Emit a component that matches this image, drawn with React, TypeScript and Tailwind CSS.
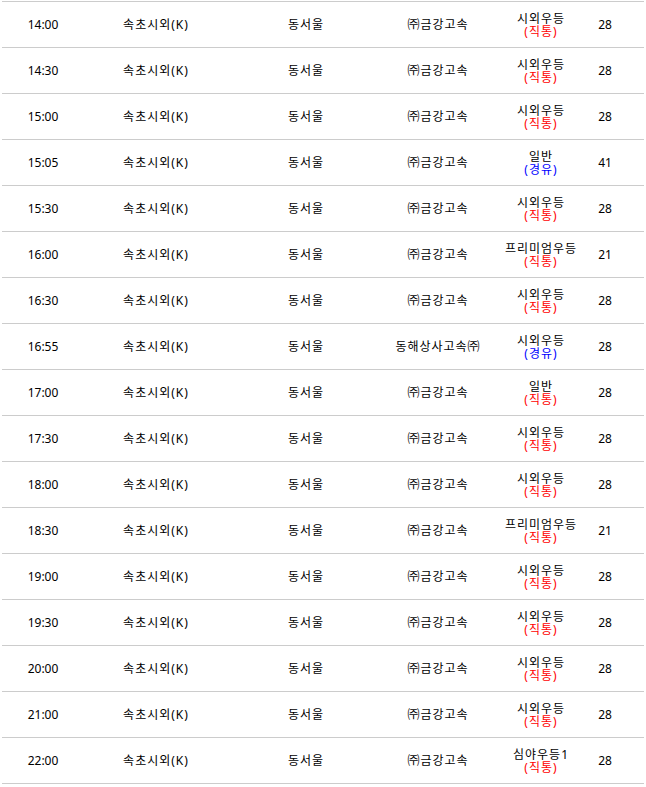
import React from 'react'

type Row = { time: string; company: string; grade: string; via: '직통' | '경유'; seats: number }

const rows: Row[] = [
  { time: '14:00', company: '㈜금강고속', grade: '시외우등', via: '직통', seats: 28 },
  { time: '14:30', company: '㈜금강고속', grade: '시외우등', via: '직통', seats: 28 },
  { time: '15:00', company: '㈜금강고속', grade: '시외우등', via: '직통', seats: 28 },
  { time: '15:05', company: '㈜금강고속', grade: '일반', via: '경유', seats: 41 },
  { time: '15:30', company: '㈜금강고속', grade: '시외우등', via: '직통', seats: 28 },
  { time: '16:00', company: '㈜금강고속', grade: '프리미엄우등', via: '직통', seats: 21 },
  { time: '16:30', company: '㈜금강고속', grade: '시외우등', via: '직통', seats: 28 },
  { time: '16:55', company: '동해상사고속㈜', grade: '시외우등', via: '경유', seats: 28 },
  { time: '17:00', company: '㈜금강고속', grade: '일반', via: '직통', seats: 28 },
  { time: '17:30', company: '㈜금강고속', grade: '시외우등', via: '직통', seats: 28 },
  { time: '18:00', company: '㈜금강고속', grade: '시외우등', via: '직통', seats: 28 },
  { time: '18:30', company: '㈜금강고속', grade: '프리미엄우등', via: '직통', seats: 21 },
  { time: '19:00', company: '㈜금강고속', grade: '시외우등', via: '직통', seats: 28 },
  { time: '19:30', company: '㈜금강고속', grade: '시외우등', via: '직통', seats: 28 },
  { time: '20:00', company: '㈜금강고속', grade: '시외우등', via: '직통', seats: 28 },
  { time: '21:00', company: '㈜금강고속', grade: '시외우등', via: '직통', seats: 28 },
  { time: '22:00', company: '㈜금강고속', grade: '심야우등1', via: '직통', seats: 28 },
]

export default function App() {
  return (
    <div className="bg-white w-[646px] h-[787px] overflow-hidden pt-px px-[2px] text-[12px] leading-[14px] text-black font-['Noto_Sans','Noto_Sans_CJK_KR',sans-serif]">
      <div className="border-t border-[#cccccc]">
        {rows.map((row, i) => (
          <div key={i} className="flex h-[46px] items-center border-b border-[#cccccc] text-center">
            <div className="w-[82px]">{row.time}</div>
            <div className="w-[144px] tracking-[1px]">속초시외(K)</div>
            <div className="w-[156px] tracking-[1px]">동서울</div>
            <div className="w-[108px] tracking-[1px]">{row.company}</div>
            {/* grade + route type, stacked tight like the original */}
            <div className="w-[98px] flex flex-col items-center tracking-[1px] leading-[13px]">
              <span>{row.grade}</span>
              <span className={row.via === '직통' ? 'text-[#ff0000]' : 'text-[#0000ff]'}>({row.via})</span>
            </div>
            <div className="w-[30px]">{row.seats}</div>
          </div>
        ))}
      </div>
    </div>
  )
}
